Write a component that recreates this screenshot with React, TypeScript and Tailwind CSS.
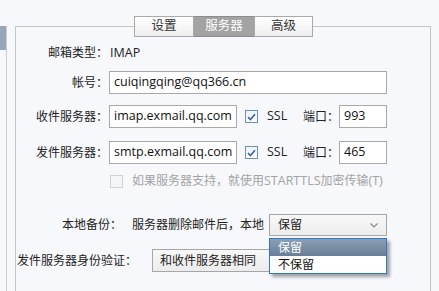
import React from "react";

function Check({ disabled = false, checked = false }: { disabled?: boolean; checked?: boolean }) {
  return (
    <div
      className={
        disabled
          ? "flex h-[13px] w-[13px] shrink-0 items-center justify-center border border-[#cfd2d6] bg-[#f4f5f7]"
          : "flex h-[13px] w-[13px] shrink-0 items-center justify-center border border-[#6f8fb8] bg-gradient-to-b from-[#eef2f7] to-white"
      }
    >
      {checked && (
        <svg width="9" height="8" viewBox="0 0 9 8">
          <path d="M1 4.2 L3.4 6.5 L8 1.3" fill="none" stroke="#2f66b0" strokeWidth="1.6" />
        </svg>
      )}
    </div>
  );
}

function Input({ value, w }: { value: string; w: string }) {
  return (
    <div className={`flex h-[23px] items-center overflow-hidden whitespace-nowrap border border-[#a9a9a9] bg-white pl-[4px] text-[12.5px] text-[#111] ${w}`}>
      {value}
    </div>
  );
}

export default function App() {
  return (
    <div
      className="relative flex h-[291px] w-[439px] overflow-hidden bg-[#f7f8fc] text-[12px] text-[#222]"
      style={{ fontFamily: '"Open Sans", "Noto Sans CJK SC", sans-serif' }}
    >
      {/* left list edge */}
      <div className="mt-[26px] w-[7px] shrink-0 border-r border-[#c9cdd3]">
        <div className="h-[24px] bg-[#97a7b7]" />
      </div>

      <div className="ml-[8px] flex w-[416px] flex-col pt-[16px]">
        {/* tabs */}
        <div className="relative z-10 ml-[119px] flex h-[21px] text-[12.5px] leading-none">
          <div className="flex w-[60px] items-center justify-center border border-[#a9a9a9] bg-gradient-to-b from-white to-[#eeeeee] text-[#333]">设置</div>
          <div className="flex w-[60px] items-center justify-center border-y border-[#8c8c8c] bg-[#a3a3a3] text-white">服务器</div>
          <div className="flex w-[59px] items-center justify-center border border-[#a9a9a9] bg-gradient-to-b from-white to-[#eeeeee] text-[#333]">高级</div>
        </div>

        {/* panel */}
        <div className="-mt-[11px] flex flex-1 flex-col border-x border-t border-[#c6c6c6]">
          <div className="mt-[15px] flex h-[22px] items-center">
            <div className="w-[92px] text-right">邮箱类型：</div>
            <div className="ml-[2px] text-[12.5px]">IMAP</div>
          </div>

          <div className="mt-[7px] flex items-center">
            <div className="w-[92px] text-right">帐号：</div>
            <div className="ml-[1px]">
              <Input value="cuiqingqing@qq366.cn" w="w-[278px]" />
            </div>
          </div>

          <div className="mt-[11px] flex items-center">
            <div className="w-[92px] text-right">收件服务器：</div>
            <div className="ml-[1px]">
              <Input value="imap.exmail.qq.com" w="w-[128px]" />
            </div>
            <div className="ml-[8px]">
              <Check checked />
            </div>
            <div className="ml-[9px] w-[36px] text-[12.5px]">SSL</div>
            <div className="w-[36px]">端口：</div>
            <Input value="993" w="w-[48px]" />
          </div>

          <div className="mt-[13px] flex items-center">
            <div className="w-[92px] text-right">发件服务器：</div>
            <div className="ml-[1px]">
              <Input value="smtp.exmail.qq.com" w="w-[128px]" />
            </div>
            <div className="ml-[8px]">
              <Check checked />
            </div>
            <div className="ml-[9px] w-[36px] text-[12.5px]">SSL</div>
            <div className="w-[36px]">端口：</div>
            <Input value="465" w="w-[48px]" />
          </div>

          <div className="mt-[10px] flex h-[14px] items-center pl-[94px] text-[#a3a3a3]">
            <Check disabled />
            <div className="ml-[9px] whitespace-nowrap">
              如果服务器支持，就使用<span className="text-[12.5px]">STARTTLS</span>加密传输<span className="text-[12.5px]">(T)</span>
            </div>
          </div>

          <div className="mt-[26px] flex h-[22px] items-center pl-[46px]">
            <div className="w-[70px]">本地备份：</div>
            <div className="w-[137px]">服务器删除邮件后，本地</div>
            <div className="flex h-[22px] w-[118px] items-center justify-between border border-[#a6a6a6] bg-gradient-to-b from-[#f8f8f8] to-[#ececec] pl-[8px] pr-[8px]">
              <span>保留</span>
              <svg width="8" height="5" viewBox="0 0 8 5">
                <path d="M0.5 0.5 L4 4 L7.5 0.5" fill="none" stroke="#888" strokeWidth="1.1" />
              </svg>
            </div>
          </div>

          <div className="mt-[13px] flex h-[23px] items-center pl-[1px]">
            <div className="w-[135px] whitespace-nowrap">发件服务器身份验证：</div>
            <div className="flex h-[23px] w-[150px] items-center border border-[#a6a6a6] bg-gradient-to-b from-[#f8f8f8] to-[#ececec] pl-[7px]">
              和收件服务器相同
            </div>
          </div>
        </div>
      </div>

      {/* open dropdown list */}
      <div className="absolute left-[269px] top-[238px] z-20 w-[118px] border border-[#2f78c8] bg-white shadow-[3px_3px_3px_rgba(0,0,0,0.35)]">
        <div className="flex h-[17px] items-center bg-gradient-to-b from-[#8d9fb4] to-[#687e98] pl-[8px] text-white">保留</div>
        <div className="flex h-[17px] items-center pl-[8px] text-[#111]">不保留</div>
      </div>
    </div>
  );
}
